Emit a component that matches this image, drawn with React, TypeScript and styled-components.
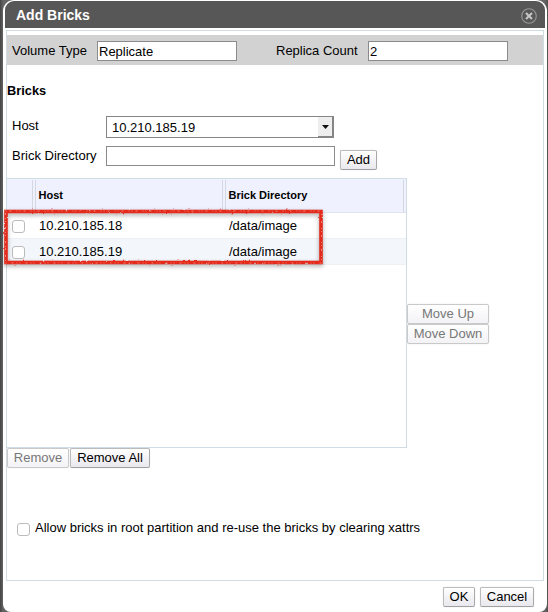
import React from "react";
import styled, { createGlobalStyle } from "styled-components";

const GlobalStyle = createGlobalStyle`
  * { box-sizing: border-box; }
  html, body { margin: 0; width: 548px; height: 612px; overflow: hidden; background: #575757; }
  body, input, button { font-family: "Liberation Sans", Arial, sans-serif; font-size: 13px; color: #000; }
`;

const Backdrop = styled.div`
  width: 548px;
  height: 612px;
  padding: 0 1px 0 3px;
  background: linear-gradient(90deg, #444 0, #646464 3px, #646464 545px, #505050 548px);
`;

const Dialog = styled.section`
  height: 612px;
  padding: 1px 2px 0;
  display: flex;
  flex-direction: column;
  background: #fff;
  border-radius: 11px 11px 8px 8px;
`;

const TitleBar = styled.header`
  height: 27px;
  flex: none;
  padding: 0 8px 0 11px;
  display: flex;
  align-items: center;
  justify-content: space-between;
  background: #575757;
  border-radius: 9px 9px 0 0;
`;

const Title = styled.h1`
  margin: 0;
  font-size: 14px;
  line-height: 26px;
  color: #fff;
`;

const CloseButton = styled.button`
  width: 16px;
  height: 16px;
  padding: 0;
  border: 0;
  background: none;
  margin-top: 2px;
  svg { display: block; }
`;

const Panel = styled.main`
  height: 551px;
  flex: none;
  margin: 2px 0 0 1px;
  width: 538px;
  padding-top: 4px;
  border: 1px solid #d0dce4;
`;

const SummaryBar = styled.div`
  height: 30px;
  display: flex;
  align-items: flex-start;
  padding: 6px 0 0 5px;
  background: #d2d2d2;
`;

const Label = styled.label<{ $width: number }>`
  width: ${(p) => p.$width}px;
  flex: none;
  line-height: 20px;
  white-space: nowrap;
`;

const TextField = styled.input<{ $width: number }>`
  width: ${(p) => p.$width}px;
  height: 20px;
  flex: none;
  padding: 1px 1px 1px;
  border: 1px solid #8b8b8b;
  border-radius: 0;
  background: #fff;
  outline: 0;
`;

const Gap = styled.span`
  width: 39px;
`;

const SectionTitle = styled.h2`
  margin: 18px 0 0 0;
  font-size: 12.8px;
  line-height: 16px;
`;

const Field = styled.div<{ $height: number; $top?: number }>`
  margin-top: ${(p) => p.$top ?? 0}px;
  height: ${(p) => p.$height}px;
  padding-left: 5px;
  display: flex;
`;

const SelectBox = styled.div`
  width: 228px;
  height: 22px;
  padding-left: 5px;
  display: flex;
  justify-content: space-between;
  border: 1px solid #858585;
  line-height: 22px;
`;

const SelectArrow = styled.span`
  width: 15px;
  height: 20px;
  padding-left: 1px;
  display: flex;
  align-items: center;
  justify-content: center;
  background: #eee;
  border-right: 1px solid #858585;
  border-bottom: 1px solid #858585;
`;

const Button = styled.button<{ $width: number }>`
  width: ${(p) => p.$width}px;
  height: 20px;
  flex: none;
  padding: 0;
  line-height: 18px;
  text-align: center;
  white-space: nowrap;
  border: 1px solid #bbb;
  border-bottom-color: #a0a0a0;
  border-right-color: #a9a9a9;
  border-radius: 2px;
  background: linear-gradient(#fff, #e8e8ee);
  box-shadow: 0 0 1px #ccc;
  &:disabled {
    color: #777;
    border-color: #c9c9c9;
    background: linear-gradient(#fff, #f3f3f6);
  }
`;

const AddSlot = styled.div`
  padding: 4px 0 0 5px;
`;

const Workspace = styled.div`
  display: flex;
  margin-top: 12px;
`;

const Table = styled.div`
  width: 400px;
  height: 270px;
  position: relative;
  border: 1px solid #d0dce6;
  border-left: 0;
`;

const HeaderRow = styled.div`
  height: 34px;
  display: grid;
  grid-template-columns: 29px 190px 178px;
  background: #eff1ff;
  border-bottom: 1px solid #dee5ee;
`;

const HeaderCell = styled.div`
  height: 32px;
  margin-top: 1px;
  padding-left: 2.5px;
  border-right: 1px solid #d4d8e0;
  font-size: 11px;
  font-weight: bold;
  line-height: 30px;
  & + & { border-left: 1px solid #d4d8e0; margin-left: -1px; }
  &:first-child { margin-right: 3px; }
  &:nth-child(2) { margin-right: 3px; }
`;

const Row = styled.div<{ $shaded?: boolean }>`
  height: 26px;
  display: grid;
  grid-template-columns: 32px 190px 1fr;
  align-items: center;
  line-height: 26px;
  background: ${(p) => (p.$shaded ? "#f3f7fb" : "#fff")};
  border-bottom: 1px solid #edf1f4;
`;

const CheckBox = styled.input.attrs({ type: "checkbox" })`
  appearance: none;
  width: 13px;
  height: 13px;
  flex: none;
  margin: 0 0 0 5px;
  border: 1px solid #bbb;
  border-radius: 3px;
  background: #fff;
`;

const Highlight = styled.svg`
  position: absolute;
  left: -7px;
  top: 26px;
  pointer-events: none;
  overflow: visible;
  filter: drop-shadow(0 2px 2px #0005);
`;

const OrderButtons = styled.div`
  display: flex;
  flex-direction: column;
  padding-top: 126px;
`;

const TableActions = styled.div`
  display: flex;
  gap: 1px;
`;

const Option = styled.label`
  margin-top: 50px;
  padding-left: 5px;
  display: flex;
  line-height: 20px;
  white-space: nowrap;
  ${CheckBox} { margin-top: 5px; margin-right: 5px; }
`;

const Footer = styled.footer`
  display: flex;
  justify-content: flex-end;
  gap: 5px;
  padding: 6px 11px 0 0;
`;

const bricks = [
  { host: "10.210.185.18", directory: "/data/image" },
  { host: "10.210.185.19", directory: "/data/image" },
];

export default function App() {
  return (
    <>
      <GlobalStyle />
      <Backdrop>
        <Dialog>
          <TitleBar>
            <Title>Add Bricks</Title>
            <CloseButton aria-label="Close">
              <svg width="16" height="16" viewBox="0 0 16 16" fill="none">
                <circle cx="8" cy="8" r="7.3" stroke="#999" strokeWidth="1.1" />
                <path d="M5 5l6 6M11 5l-6 6" stroke="#c4c4c4" strokeWidth="2.2" />
              </svg>
            </CloseButton>
          </TitleBar>
          <Panel>
            <SummaryBar>
              <Label $width={85}>Volume Type</Label>
              <TextField $width={140} defaultValue="Replicate" />
              <Gap />
              <Label $width={92}>Replica Count</Label>
              <TextField $width={140} defaultValue="2" />
            </SummaryBar>
            <SectionTitle>Bricks</SectionTitle>
            <Field $top={17} $height={30}>
              <Label $width={94}>Host</Label>
              <SelectBox>
                <span>10.210.185.19</span>
                <SelectArrow>
                  <svg width="7" height="4" viewBox="0 0 7 4"><path d="M0 0h7L3.5 4z" fill="#111" /></svg>
                </SelectArrow>
              </SelectBox>
            </Field>
            <Field $height={20}>
              <Label $width={94}>Brick Directory</Label>
              <TextField $width={229} />
              <AddSlot><Button $width={37}>Add</Button></AddSlot>
            </Field>
            <Workspace>
              <Table>
                <HeaderRow>
                  <HeaderCell />
                  <HeaderCell>Host</HeaderCell>
                  <HeaderCell>Brick Directory</HeaderCell>
                </HeaderRow>
                {bricks.map((brick, i) => (
                  <Row key={brick.host} $shaded={i % 2 === 1}>
                    <CheckBox />
                    <span>{brick.host}</span>
                    <span>{brick.directory}</span>
                  </Row>
                ))}
                <Highlight width="330" height="66" fill="none">
                  <defs>
                    <filter id="crayon" x="-5%" y="-10%" width="110%" height="120%" colorInterpolationFilters="sRGB">
                      <feTurbulence type="fractalNoise" baseFrequency="0.35" numOctaves="1" seed="4" result="grain" />
                      <feDisplacementMap in="SourceGraphic" in2="grain" scale="2.4" xChannelSelector="R" yChannelSelector="G" />
                    </filter>
                  </defs>
                  <g filter="url(#crayon)">
                    <rect x="6" y="6.5" width="315" height="51" stroke="#e32a1b" strokeWidth="3.6" />
                    <rect x="5.5" y="6" width="316" height="52" stroke="#f6a29a" strokeWidth=".7" strokeDasharray="1 3 2 5 1 2" />
                  </g>
                </Highlight>
              </Table>
              <OrderButtons>
                <Button $width={82} disabled>Move Up</Button>
                <Button $width={82} disabled>Move Down</Button>
              </OrderButtons>
            </Workspace>
            <TableActions>
              <Button $width={62} disabled>Remove</Button>
              <Button $width={80}>Remove All</Button>
            </TableActions>
            <Option>
              <CheckBox />
              Allow bricks in root partition and re-use the bricks by clearing xattrs
            </Option>
          </Panel>
          <Footer>
            <Button $width={32}>OK</Button>
            <Button $width={54}>Cancel</Button>
          </Footer>
        </Dialog>
      </Backdrop>
    </>
  );
}
